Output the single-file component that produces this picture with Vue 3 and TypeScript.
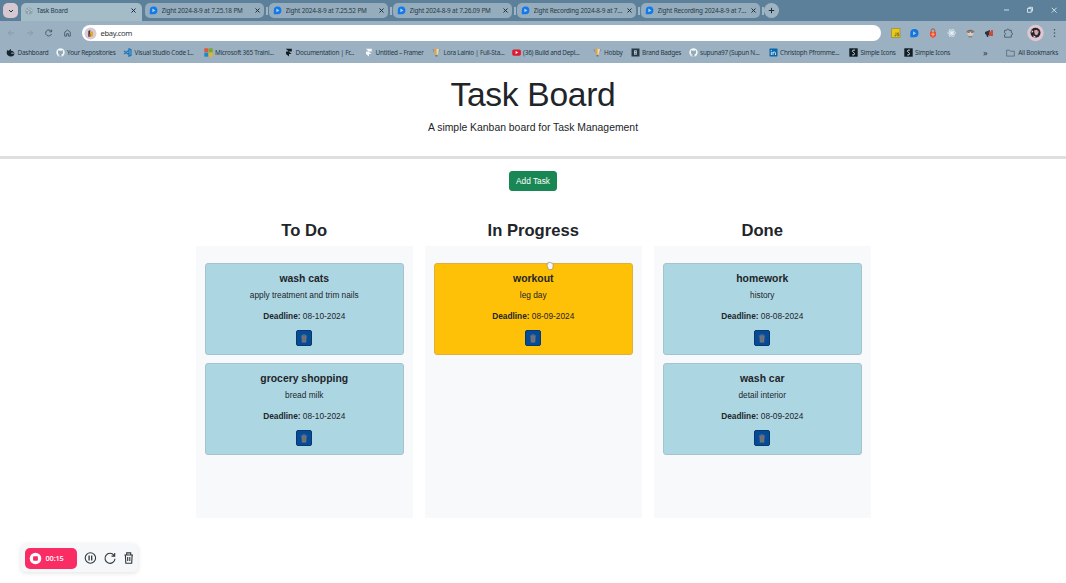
<script setup lang="ts">
interface Task { title: string; text: string; date: string }
interface Column { name: string; tone: string; tasks: Task[] }

const tabs: string[] = [
  'Zight 2024-8-9 at 7.25.18 PM',
  'Zight 2024-8-9 at 7.25.52 PM',
  'Zight 2024-8-9 at 7.26.09 PM',
  'Zight Recording 2024-8-9 at 7…',
  'Zight Recording 2024-8-9 at 7…',
]

const bookmarks: { label: string; icon: string; width: number }[] = [
  { label: 'Dashboard', icon: 'dash', width: 49.5 },
  { label: 'Your Repositories', icon: 'github', width: 67.5 },
  { label: 'Visual Studio Code I...', icon: 'vscode', width: 80.5 },
  { label: 'Microsoft 365 Traini...', icon: 'ms', width: 80.5 },
  { label: 'Documentation | Fr...', icon: 'framer', width: 80 },
  { label: 'Untitled – Framer', icon: 'framerw', width: 68 },
  { label: 'Lora Lainio | Full-Sta...', icon: 'bulb', width: 79.5 },
  { label: '(36) Build and Depl...', icon: 'yt', width: 81 },
  { label: 'Hobby', icon: 'bulb', width: 38 },
  { label: 'Brand Badges', icon: 'badge', width: 58 },
  { label: 'supuna97 (Supun N...', icon: 'github', width: 80 },
  { label: 'Christoph Pfromme...', icon: 'in', width: 80.5 },
  { label: 'Simple Icons', icon: 'simple', width: 54.5 },
  { label: 'Simple Icons', icon: 'simple', width: 54 },
]

const columns: Column[] = [
  {
    name: 'To Do', tone: 'blue', tasks: [
      { title: 'wash cats', text: 'apply treatment and trim nails', date: '08-10-2024' },
      { title: 'grocery shopping', text: 'bread milk', date: '08-10-2024' },
    ],
  },
  {
    name: 'In Progress', tone: 'amber', tasks: [
      { title: 'workout', text: 'leg day', date: '08-09-2024' },
    ],
  },
  {
    name: 'Done', tone: 'blue', tasks: [
      { title: 'homework', text: 'history', date: '08-08-2024' },
      { title: 'wash car', text: 'detail interior', date: '08-09-2024' },
    ],
  },
]
</script>

<template>
  <div class="screen">
    <header class="chrome">
      <div class="strip">
        <div class="search"><svg width="6" height="6" viewBox="0 0 6 6"><path d="M1 2l2 2 2-2" class="dark" /></svg></div>
        <div class="tab active">
          <svg class="fav" width="8" height="8" viewBox="0 0 8 8"><circle cx="4" cy="4" r="3.6" fill="#8da1ae" /><path d="M1 3l2 .4 1 1-.7 2.3M3.2.8l1 1.4 1.6.2 1 1.6" stroke="#bdccd4" stroke-width="1" fill="none" /></svg>
          <span class="name">Task Board</span>
          <svg class="close" width="5" height="5" viewBox="0 0 5 5"><path d="M.5.5l4 4m0-4l-4 4" class="dark" /></svg>
        </div>
        <div v-for="(t, i) in tabs" :key="i" class="slot">
          <div class="tab">
            <svg class="fav" width="9" height="9" viewBox="0 0 9 9"><path d="M.8 8.2V4.3A3.8 3.8 0 1 1 4.6 8.2z" fill="#1479e8" /><path d="M3.4 2.6l3 1.8-3 1.8z" fill="#a9d3fa" /></svg>
            <span class="name">{{ t }}</span>
            <svg class="close" width="5" height="5" viewBox="0 0 5 5"><path d="M.5.5l4 4m0-4l-4 4" class="dark" /></svg>
          </div>
        </div>
        <div class="plus"><svg width="7" height="7" viewBox="0 0 7 7"><path d="M3.5.8v5.4M.8 3.5h5.4" class="dark" /></svg></div>
        <svg class="window" width="56" height="10" viewBox="0 0 56 10" fill="none" stroke="#dce6ec" stroke-width=".9">
          <path d="M1 5h5" /><path d="M24.5 3.5h3.8v3.8h-3.8zM25.8 3.5V2.3h3.7v3.8h-1.2" /><path d="M48.8 2.8l4.8 4.8m0-4.8l-4.8 4.8" />
        </svg>
      </div>

      <div class="toolbar">
        <svg class="nav" width="76" height="16" viewBox="0 0 76 16" fill="none" stroke-width=".9">
          <path d="M14 8H8.3M11 5.3L8.3 8l2.7 2.7M27 8h5.7M30 5.3L32.7 8 30 10.7" stroke="#8398a7" />
          <path d="M51.2 6.3A3 3 0 1 0 51.5 9M51.6 4.6v2.2h-2.2" stroke="#3e5261" />
          <path d="M64.7 7.2L67.5 5l2.8 2.2v3.9h-1.9V8.7h-1.8v2.4h-1.9z" stroke="#465b6a" />
        </svg>
        <div class="omnibox">
          <svg width="13" height="13" viewBox="0 0 13 13"><circle cx="6.5" cy="6.5" r="6" fill="#d8cbd4" /><path d="M4.3 4l2-1v6.5H4.3z" fill="#41345b" /><path d="M6 4.5h3v5H6z" fill="#dfad24" /><path d="M4 7h2.5v2.5H4z" fill="#8e4c44" /></svg>
          <span>ebay.com</span>
        </div>
        <svg class="extensions" width="185" height="20" viewBox="881 23 185 20">
          <path d="M891.5 28.5h8.5v9h-8.5z" fill="#e8c91b" stroke="#8e8326" stroke-width=".6" /><path d="M896 32.5v3.3h-1.6M899 33h-1.5v1.3h1.3v1.5H897" fill="none" stroke="#5d551d" stroke-width=".7" />
          <path d="M910.3 37.3v-4.2A4.1 4.1 0 1 1 914.4 37.3z" fill="#1276dc" /><path d="M913 31.2l3.3 2-3.3 2z" fill="#94c8f4" />
          <path d="M931.2 32v-1.4a1.8 1.8 0 0 1 3.6 0V32" fill="none" stroke="#c64b36" /><path d="M930 32h6v4l-3 2-3-2z" fill="#e84e31" /><path d="M931.3 34.2h3.4M933 32.5v4" stroke="#ffc19f" stroke-width=".8" />
          <g stroke="#dae5ec" fill="none" stroke-width=".8"><ellipse cx="951.7" cy="33" rx="4" ry="1.6" /><ellipse cx="951.7" cy="33" rx="4" ry="1.6" transform="rotate(60 951.7 33)" /><ellipse cx="951.7" cy="33" rx="4" ry="1.6" transform="rotate(120 951.7 33)" /></g><circle cx="951.7" cy="33" r="1.3" fill="#edf3f5" />
          <path d="M966.4 32.3c0-3.5 8-3.5 8 0z" fill="#786763" /><path d="M967.5 31.8h5.8v2.5c-1 2.4-4.8 2.4-5.8 0z" fill="#dfc8bb" /><path d="M967.5 32.5h2.2m1.4 0h2.2M968.5 36.8h3.7" stroke="#6b5e60" stroke-width=".8" />
          <path d="M985 32l5-2v6l-5-2z" fill="#26343e" /><path d="M986 34l1 3h1.3l-.6-3z" fill="#26343e" /><path d="M989 31.5h4V36h-4z" fill="#c94d3c" /><circle cx="992" cy="31" r="1" fill="#d83634" />
          <path d="M1004.5 30.3h2.2c0-1.8 2.3-1.8 2.3 0h2.3v2.4c1.7 0 1.7 2.2 0 2.2v2.3h-6.8v-2.3c1.4-.2 1.4-2 0-2.2z" fill="none" stroke="#506574" stroke-width="1" />
          <circle cx="1035.5" cy="33" r="8.2" fill="#e1c5d1" /><circle cx="1035.5" cy="32.7" r="5" fill="#20252c" /><path d="M1034 30.5l3-.7 1.8 2-1.6 3.4-2.4-.6z" fill="#d9a5ac" /><path d="M1031.5 30l1.8 1.3-1.5 2zM1033 35.6l2.3.6.2 1.4-1.5-.4z" fill="#ecdce2" /><path d="M1037 30.6l1.6.6" stroke="#d7375b" />
          <g fill="#42535f"><circle cx="1054.5" cy="29.8" r=".8" /><circle cx="1054.5" cy="33" r=".8" /><circle cx="1054.5" cy="36.2" r=".8" /></g>
        </svg>
      </div>

      <div class="bookmarks">
        <div v-for="(b, i) in bookmarks" :key="i" class="bookmark" :style="{ width: b.width + 'px' }">
          <svg width="9" height="9" viewBox="0 0 9 9">
            <g v-if="b.icon === 'dash'"><path d="M1 2.2l2 .5L4.5.8l.6 2c2 .2 3.3 1.2 3.3 3C8.4 7.4 6.8 8.5 5 8.5 2.5 8.5.5 6.8.7 4.8z" fill="#15242d" /><path d="M5.2 5.2h2.7" stroke="#c8d5dd" stroke-width=".8" /></g>
            <g v-else-if="b.icon === 'github'"><circle cx="4.5" cy="4.5" r="4.2" fill="#f1f6f9" /><path d="M2.2 2.1l1.1.7h2.4l1.1-.7.2 2.3c0 1.1-.7 1.7-1.5 1.8v2.5h-2V7.5c-1 .2-1.4-.4-1.7-.9l1.7.1v-.5C2.5 6 2 5.3 2 4.4z" fill="#91a8b8" /></g>
            <path v-else-if="b.icon === 'vscode'" d="M1 3l5 3.8V2.2L1 6M6 .8l2 .9v5.6l-2 .9z" fill="none" stroke="#1676bd" stroke-width="1.2" />
            <g v-else-if="b.icon === 'ms'"><path d="M.3.3h4v4h-4z" fill="#df573b" /><path d="M4.7.3h4v4h-4z" fill="#76a82f" /><path d="M.3 4.7h4v4h-4z" fill="#198bc5" /><path d="M4.7 4.7h4v4h-4z" fill="#e8b221" /></g>
            <path v-else-if="b.icon === 'framer' || b.icon === 'framerw'" d="M1.8.7h6v2.7h-3l2.7 2.5H5v2.7L2 5.9V3.4h2.7z" :fill="b.icon === 'framer' ? '#101b22' : '#f4f8fa'" />
            <g v-else-if="b.icon === 'bulb'"><path d="M1.7 1.2l2.8-.5.6 6.5H3.7z" fill="#e8a22b" /><path d="M4.5.7l2.8.6-2 5.9h-.8z" fill="#f3d7a0" /><path d="M1 1l.8 3M8 1l-.9 2.6" stroke="#7685bd" stroke-width=".8" /><path d="M3.5 7h1.9v1.5H3.5z" fill="#607289" /></g>
            <g v-else-if="b.icon === 'yt'"><rect x=".2" y="1.4" width="8.7" height="6.3" rx="1.6" fill="#dc1c32" /><path d="M3.6 3v3l2.6-1.5z" fill="#fff" /></g>
            <g v-else-if="b.icon === 'badge'"><path d="M.5.5h8v8h-8z" fill="#263946" /><path d="M3 2.3h2.8v4.4H3z" fill="#b9c9d2" /><path d="M3.8 3.5h1M3.8 5.5h1" stroke="#263946" stroke-width=".7" /></g>
            <g v-else-if="b.icon === 'in'"><rect x=".5" y=".5" width="8" height="8" rx=".7" fill="#0867ad" /><path d="M2.3 3.8V7M2.3 2v1M4 3.8V7M4 5c.2-1.4 2.5-1.5 2.5.2V7" fill="none" stroke="#e5f0f5" stroke-width=".9" /></g>
            <g v-else><path d="M.3.3h8.4v8.4H.3z" fill="#101c24" /><path d="M6 2.1H4l-.7 1.2 2.3 2.1L5 6.9H3.2" fill="none" stroke="#d3dde2" stroke-width=".9" /></g>
          </svg>
          <span>{{ b.label }}</span>
        </div>
        <span class="more">»</span>
        <div class="all">
          <svg width="9" height="8" viewBox="0 0 9 8"><path d="M.6 1.2h2.8l.8 1h4.1v4.9H.6z" fill="none" stroke="#526875" stroke-width=".8" /></svg>
          <span>All Bookmarks</span>
        </div>
      </div>
    </header>

    <main>
      <section class="hero">
        <h1>Task Board</h1>
        <p>A simple Kanban board for Task Management</p>
      </section>
      <button class="add">Add Task</button>
      <div class="board">
        <section v-for="c in columns" :key="c.name" class="column">
          <h2>{{ c.name }}</h2>
          <div class="lane">
            <article v-for="t in c.tasks" :key="t.title" class="card" :class="c.tone">
              <h3>{{ t.title }}</h3>
              <p class="text">{{ t.text }}</p>
              <p class="deadline"><b>Deadline:</b> {{ t.date }}</p>
              <button class="delete" aria-label="Delete">
                <svg width="8" height="9" viewBox="0 0 8 9"><path d="M1.5 2.3h5L6.2 8.5H1.8z" fill="#76777a" /><path d="M.8 2h6.4M2.8 1.8V.8h2.4v1" fill="none" stroke="#777b80" stroke-width=".8" /><path d="M3 3.3v4M4.7 3.3v4" stroke="#555f70" stroke-width=".5" /></svg>
              </button>
            </article>
          </div>
        </section>
      </div>
    </main>

    <svg class="cursor" width="8" height="10" viewBox="0 0 8 10"><path d="M1.2 4.8L.7 3.6c.1-.8.8-.8 1.2-.2V2c.1-.8 1-.8 1.2 0 .1-1 1.2-1 1.3 0 .3-.7 1.3-.6 1.3.3.4-.5 1.3-.3 1.3.5v3.4L6 8.5H2.6z" fill="#f7f7f7" stroke="#85878b" stroke-width=".6" /></svg>

    <div class="recorder">
      <div class="timer">
        <svg width="13" height="13" viewBox="0 0 13 13"><circle cx="6.5" cy="6.5" r="5.8" fill="#fff" /><rect x="4.1" y="4.2" width="4.8" height="4.6" rx=".8" fill="#f52b61" /></svg>
        <span>00:15</span>
      </div>
      <svg class="controls" width="51" height="14" viewBox="0 0 51 14" fill="none" stroke="#30383d" stroke-width="1.1">
        <circle cx="6.4" cy="7" r="5.2" /><path d="M5.1 4.6v4.8M7.7 4.6v4.8" stroke-width="1.3" />
        <path d="M30 4.3A5 5 0 1 0 31 7.7M30.7 2v3.1h-3.2" />
        <path d="M40.4 4h8.6M42.7 3.8V1.9h4v1.9M41.4 4.2l.4 8h5.9l.4-8M43.7 6.1v4M45.8 6.1v4" />
      </svg>
    </div>
  </div>
</template>

<style>
body { margin: 0; overflow: hidden; background: #fff; }
</style>

<style scoped>
* { box-sizing: border-box; }
.screen { position: relative; width: 1066px; height: 583px; background: #fff; overflow: hidden; font-family: "Liberation Sans", Arial, sans-serif; color: #212529; }
svg { display: block; flex: none; }
h1, h2, h3, p { margin: 0; }
.chrome { height: 63px; background: #9bb1c1; font-family: "Noto Sans", sans-serif; color: #263a48; }
.dark { fill: none; stroke: #1d2e39; stroke-width: 1; }
.strip { height: 21px; background: #5c8099; display: flex; align-items: flex-start; padding: 3px 7px 0 3px; }
.search { width: 15px; height: 15px; border-radius: 5px; background: #d5c8d1; display: grid; place-items: center; margin-right: 3px; }
.tab { height: 15px; border-radius: 5px; background: #95acbc; display: flex; align-items: center; padding: 0 4.5px 0 4px; font-size: 6.4px; letter-spacing: -.15px; }
.tab .name { margin-left: 3.5px; flex: 1; white-space: nowrap; overflow: hidden; }
.active { width: 121px; height: 18px; border-radius: 5px 5px 0 0; background: #a4bbc8; padding-bottom: 3px; margin-right: 3px; }
.active .close { margin-right: 2px; }
.slot { width: 124px; padding-right: 5px; position: relative; }
.slot::after { content: ""; position: absolute; right: 1.5px; top: 4px; width: 1.5px; height: 8px; background: #a0b5c3; }
.plus { width: 15px; height: 15px; border-radius: 50%; background: #9eb3c1; display: grid; place-items: center; margin-left: -1px; }
.window { margin: 2px 0 0 auto; }
.toolbar { height: 25px; display: flex; align-items: center; padding-bottom: 1px; }
.nav { margin-right: 6px; }
.omnibox { width: 799px; height: 16px; border-radius: 8px; background: #fff; display: flex; align-items: center; padding-left: 1.5px; font-size: 7.6px; letter-spacing: -.32px; color: #303940; }
.omnibox span { margin-left: 4px; }
.bookmarks { height: 17px; display: flex; align-items: center; padding: 0 8px 4px 6px; font-size: 6.4px; letter-spacing: -.25px; }
.bookmark { flex: none; display: flex; align-items: center; white-space: nowrap; }
.bookmark span { margin-left: 2.6px; }
.more { margin-left: 25.5px; font-size: 9px; line-height: 8px; }
.all { margin-left: auto; display: flex; align-items: center; gap: 3.5px; white-space: nowrap; }
.hero { height: 96px; border-bottom: 3px solid #dedfdf; text-align: center; padding-top: 12px; }
h1 { font-size: 33.6px; line-height: 40px; font-weight: 400; letter-spacing: -.3px; }
.hero p { margin-top: 5px; font-size: 10.4px; line-height: 15px; }
.add { display: block; margin: 12px auto 0; width: 48px; height: 20px; border: 1px solid #198754; border-radius: 3px; background: #198754; color: #fff; padding: 0; font: 8.3px/18px "Liberation Sans", Arial, sans-serif; }
.board { width: 675px; margin: 29px 0 0 196px; display: grid; grid-template-columns: repeat(3, 216.5px); column-gap: 12.5px; }
.column { text-align: center; }
h2 { font-size: 16.6px; line-height: 20px; height: 26px; padding-top: 1px; }
.lane { height: 272px; background: #f8f9fa; padding: 17px 8.5px 0; display: flex; flex-direction: column; gap: 8px; }
.card { height: 92px; border: 1px solid #a3c4cf; border-radius: 3px; background: #add6e3; padding-top: 8px; }
.amber { background: #ffc107; border-color: #ddb13c; }
h3 { font-size: 10.4px; line-height: 14px; }
.text { font-size: 8.3px; line-height: 12px; margin-top: 3px; }
.deadline { font-size: 8.3px; line-height: 12px; margin-top: 9px; }
.delete { display: grid; place-items: center; width: 16px; height: 16px; margin: 8px auto 0; padding: 0; background: #064b98; border: 1px solid #07396f; border-radius: 2px; }
.cursor { position: absolute; left: 546px; top: 260.5px; }
.recorder { position: absolute; left: 21px; top: 544px; width: 117px; height: 28px; border-radius: 5px; background: #f6f7f9; box-shadow: 0 1px 5px #0000001f; display: flex; align-items: center; padding: 0 4px; }
.timer { flex: none; width: 52px; height: 21px; border-radius: 5px; background: #f92d63; color: #fff; display: flex; align-items: center; padding-left: 4px; font: 600 7.4px "Open Sans", sans-serif; letter-spacing: -.15px; }
.timer span { margin-left: 3.5px; }
.controls { margin-left: 7px; }
</style>
